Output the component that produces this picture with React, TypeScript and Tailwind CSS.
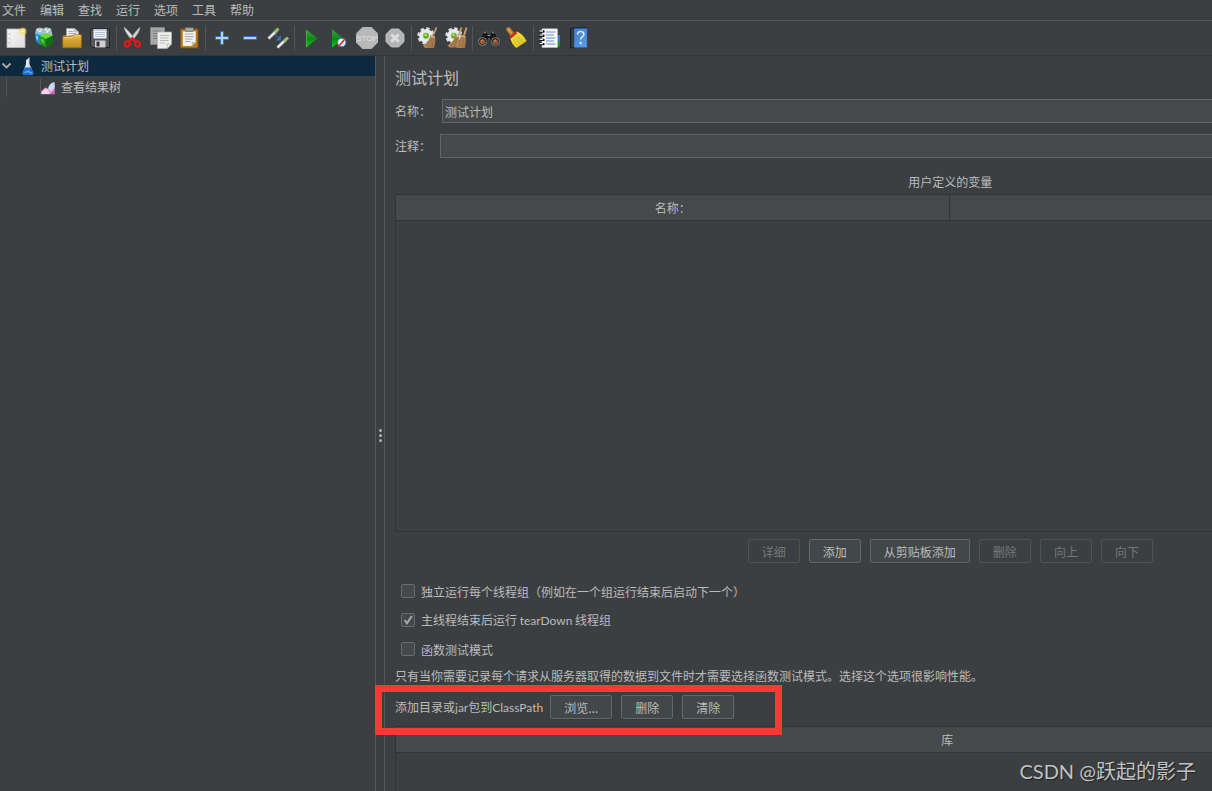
import React, { useState } from 'react';

const menus = ['文件', '编辑', '查找', '运行', '选项', '工具', '帮助'];

interface IconProps {
	children: React.ReactNode;
}

const Icon: React.FC<IconProps> = ({ children }) => (
	<svg width="24" height="24" viewBox="0 0 24 24" aria-hidden="true">{ children }</svg>
);

// Shared gradients for the toolbar and the tree icons
const Gradients = () => (
	<svg width="0" height="0" className="absolute" aria-hidden="true">
		<defs>
			<linearGradient id="paper" x1="0" y1="0" x2="1" y2="1">
				<stop offset="0" stopColor="#f8f8f8" />
				<stop offset="1" stopColor="#dcdcdc" />
			</linearGradient>
			<radialGradient id="glow">
				<stop offset="0" stopColor="#fffbd0" />
				<stop offset="0.45" stopColor="#f7e06a" stopOpacity="0.9" />
				<stop offset="1" stopColor="#f5d742" stopOpacity="0" />
			</radialGradient>
			<linearGradient id="gold" x1="0" y1="0" x2="0" y2="1">
				<stop offset="0" stopColor="#e3b84a" />
				<stop offset="1" stopColor="#c08a1c" />
			</linearGradient>
			<linearGradient id="play" x1="0" y1="0" x2="0" y2="1">
				<stop offset="0" stopColor="#3fa245" />
				<stop offset="0.5" stopColor="#0c8a10" />
				<stop offset="1" stopColor="#16c416" />
			</linearGradient>
			<linearGradient id="book" x1="0" y1="0" x2="1" y2="1">
				<stop offset="0" stopColor="#3d7fd6" />
				<stop offset="1" stopColor="#5c9ce8" />
			</linearGradient>
			<linearGradient id="straw" x1="0" y1="0" x2="1" y2="1">
				<stop offset="0" stopColor="#c59a6a" />
				<stop offset="1" stopColor="#9a6f42" />
			</linearGradient>
			<linearGradient id="yellowBroom" x1="0" y1="0" x2="1" y2="1">
				<stop offset="0" stopColor="#f7e84a" />
				<stop offset="1" stopColor="#d9c01c" />
			</linearGradient>
		</defs>
	</svg>
);

const NewIcon = () => (
	<Icon>
		<rect x="3" y="3" width="18" height="18.5" fill="url(#paper)" stroke="#b9b9b9" strokeWidth="0.8" />
		<path d="M6.5 3.5V21" stroke="#dedede" strokeWidth="0.6" />
		<path d="M4.6 8h1M4.6 12.5h1M4.6 17h1" stroke="#9a9a9a" strokeWidth="1" />
		<circle cx="18.8" cy="5.4" r="4.6" fill="url(#glow)" />
	</Icon>
);

const TemplatesIcon = () => (
	<Icon>
		<path d="M3 7l1.5-4.5L8 1.5l3 1.2 3-1.4 5 1.2L20.500 9 12 10z" fill="#a9bcc4" />
		<path d="M5 3l3.5 3.5M10 2.5L7 7M13 2.5l3 4M18 3l-4 4" stroke="#e9eff1" strokeWidth="1.3" />
		<path d="M2.8 7.5L9 9v10.5l-5-4z" fill="#1c8ccb" />
		<path d="M2.8 7.5L8 6l3.5 2L9 9.500z" fill="#6fc4ef" />
		<path d="M4 9.5l1.8.7v4L4.500 13z" fill="#a5def8" />
		<path d="M7.8 10l6 3v8.8l-6-4.3z" fill="#1f9d1d" />
		<path d="M13.8 13L21 9.5v8l-7.2 4.3z" fill="#0f6f11" />
		<path d="M7.8 10L14 6.800 21 9.5 13.8 13z" fill="#67dc35" />
		<path d="M9 12.3l3 1.6v3.8l-3-2z" fill="#4fc73a" />
	</Icon>
);

const OpenIcon = () => (
	<Icon>
		<path d="M3 9h3v11H3z" fill="#a87712" />
		<path d="M6.5 2.5h8l4 3.4V13h-12z" fill="#f0f0f0" stroke="#a8a8a8" strokeWidth="0.7" />
		<path d="M14.3 2.5v3.6h4" fill="#cfcfcf" stroke="#a8a8a8" strokeWidth="0.6" />
		<path d="M8.5 5.5h4.5M8.5 7.5h7.5M8.5 9.5h7.5" stroke="#a2a2a2" strokeWidth="0.9" />
		<path d="M2.8 10.5h9l2-1.8h7.6v13H2.8z" fill="url(#gold)" stroke="#9e6e10" strokeWidth="0.7" />
		<path d="M3.8 11.6h8.4l2-1.8h6.3" fill="none" stroke="#f2d487" strokeWidth="0.9" />
	</Icon>
);

const SaveIcon = () => (
	<Icon>
		<path d="M4 3h16.5l1 1v17.5H4.2l-1.7-1.7V4z" fill="#54585c" stroke="#202325" strokeWidth="1" />
		<path d="M5.5 3.2h13v9.3h-13z" fill="#f0f4fa" />
		<path d="M5.5 3.2h13v1.5h-13z" fill="#aebfd6" />
		<path d="M7 6.5h10M7 8.5h10M7 10.5h10" stroke="#a9bbd4" strokeWidth="0.9" />
		<path d="M7 14.5h10.5v7H7z" fill="#cfcfcf" />
		<path d="M8.5 15.6h3v4.8h-3z" fill="#303336" />
	</Icon>
);

const CutIcon = () => (
	<Icon>
		<path d="M3.5 1.5c0 3 3.5 8 7.5 12.5l2-1.5C10 8 6 3.5 3.5 1.5z" fill="#e2e4e4" stroke="#b4b8b8" strokeWidth="0.9" />
		<path d="M18.7 1.5c.3 3-3 8-7.2 12.5l-2-1.5C13 8 16 4 18.7 1.5z" fill="#d2d6d6" stroke="#a4a8a8" strokeWidth="0.9" />
		<ellipse cx="6.2" cy="18" rx="2.3" ry="2.8" transform="rotate(35 6.2 18)" fill="none" stroke="#d81a1a" strokeWidth="2.4" />
		<ellipse cx="16.5" cy="18" rx="2.3" ry="2.8" transform="rotate(-35 16.5 18)" fill="none" stroke="#d81a1a" strokeWidth="2.4" />
		<path d="M8 15.5l3.3-3 3.4 3" fill="none" stroke="#d81a1a" strokeWidth="2.6" />
	</Icon>
);

const CopyIcon = () => (
	<Icon>
		<path d="M1.5 1.5h14v17h-14z" fill="#a6a8a6" stroke="#898b89" strokeWidth="0.7" />
		<path d="M4 5h8M4 7.5h5M4 10h4M4 12.5h4" stroke="#7b7d7b" />
		<path d="M8.5 6h14v12L18 22.5H8.5z" fill="#ededeb" stroke="#b4b4b2" strokeWidth="0.7" />
		<path d="M22.5 18H18v4.5z" fill="#fff" stroke="#9d9d9b" strokeWidth="0.7" />
		<path d="M11 9.5h9M11 12h8.5M11 14.5h8.5M11 17h5" stroke="#b7b7b5" />
	</Icon>
);

const PasteIcon = () => (
	<Icon>
		<rect x="3.5" y="3" width="17.5" height="19" rx="1" fill="#b9791f" stroke="#7e4f10" strokeWidth="0.8" />
		<path d="M5.8 5.2h12.9v11.3L15.2 20H5.8z" fill="#f1f1ef" />
		<path d="M18.7 16.5h-3.5V20z" fill="#c5c5c3" stroke="#9d9d9b" strokeWidth="0.5" />
		<rect x="8" y="1.6" width="8.5" height="3.8" rx="1" fill="#a5a7a4" stroke="#5f615e" strokeWidth="0.7" />
		<path d="M8 8h8.5M8 10.5h8.5M8 13h7.5M8 15.5h5.5" stroke="#a9a9a7" />
	</Icon>
);

const PlusIcon = () => (
	<Icon>
		<path d="M10.5 5.5h3v5h5v3h-5v5h-3v-5h-5v-3h5z" fill="#b5d1f0" stroke="#3070c0" />
	</Icon>
);

const MinusIcon = () => (
	<Icon>
		<path d="M5.5 10.5h13v3h-13z" fill="#b5d1f0" stroke="#3070c0" />
	</Icon>
);

const ToggleIcon = () => (
	<Icon>
		<path d="M2.5 12.5l8.5-8" stroke="#8b8e8b" strokeWidth="3.2" />
		<path d="M2.5 12.5L9 6.3" stroke="#f0f0ee" strokeWidth="2" />
		<path d="M8.5 6.5l4-4" stroke="#90c66b" strokeWidth="2.8" />
		<path d="M11.5 21.5l8.5-8" stroke="#8b8e8b" strokeWidth="3.2" />
		<path d="M11.5 21.5l6.5-6.2" stroke="#f0f0ee" strokeWidth="2" />
		<path d="M18 15.5l4-4" stroke="#90c66b" strokeWidth="2.8" />
		<path d="M9 8.5l4 4" stroke="#2d74d8" strokeWidth="1.2" strokeDasharray="1.5 0.7" />
		<path d="M14.8 9.5v5h-5z" fill="#2d74d8" />
	</Icon>
);

const StartIcon = () => (
	<Icon>
		<path d="M7 3.5l11.5 9L7 21.8z" fill="url(#play)" />
		<path d="M7.5 4.5v16.3" stroke="#45bd45" strokeWidth="0.8" />
	</Icon>
);

const StartNoPauseIcon = () => (
	<Icon>
		<path d="M5 3.5l11.5 9L5 21.8z" fill="url(#play)" />
		<circle cx="14.7" cy="16.5" r="4.2" fill="#eef4fb" stroke="#3a78c8" strokeWidth="1.1" />
		<path d="M11.3 20.8l7-8.3" stroke="#dd2a1c" strokeWidth="1.6" />
	</Icon>
);

const StopIcon = () => (
	<Icon>
		<path d="M7.5 1h9L23 7.5v9L16.5 23h-9L1 16.5v-9z" fill="#b9b9b9" />
		<path d="M7.9 2h8.2L22 7.9v8.2L16.1 22H7.9L2 16.1V7.9z" fill="none" stroke="#adadad" strokeWidth="0.6" />
		<text x="12" y="15" textAnchor="middle" className="font-['Liberation_Sans'] text-[8px]" fill="#e2e2e2">STOP</text>
	</Icon>
);

const ShutdownIcon = () => (
	<Icon>
		<path d="M8.3 3h7.4L21 8.3v7.4L15.7 21H8.3L3 15.7V8.3z" fill="#b4b4b4" stroke="#c9c9c9" strokeWidth="0.8" />
		<path d="M8.2 8.2l7.6 7.6M15.8 8.2l-7.6 7.6" stroke="#dedede" strokeWidth="3" />
	</Icon>
);

const Gear = () => (
	<>
		<circle cx="10" cy="10" r="7.4" fill="none" stroke="#dcdcdc" strokeWidth="2.6" strokeDasharray="3.4 2.41" />
		<circle cx="10" cy="10" r="6.9" fill="#e9e9e9" />
		<circle cx="10" cy="9.7" r="3.4" fill="#cfd8c6" />
		<circle cx="10" cy="9.7" r="2.8" fill="#5fae22" />
		<circle cx="9.6" cy="9" r="1.3" fill="#b5e876" />
	</>
);

const ClearIcon = () => (
	<Icon>
		<Gear />
		<path d="M20.5 1.5l-3.5 8" stroke="#c9a272" strokeWidth="1.8" />
		<path d="M14.5 9l4.5 1.5c.5 4 .3 8-1 11.5H9l-2-2.500c4-2.500 6.500-6 7.500-10.500z" fill="url(#straw)" />
		<path d="M15 12l-4.500 8M16.500 12.500L13 21M17.800 12.500L16 21" stroke="#86603a" strokeWidth="0.6" />
		<path d="M14.5 10l4.500 1.500" stroke="#e0bf93" />
	</Icon>
);

const ClearAllIcon = () => (
	<Icon>
		<Gear />
		<path d="M17.5 1.5l-3 8M22.5 1.5l-2.5 8" stroke="#c9a272" strokeWidth="1.8" />
		<path d="M12 9l3 1c.5 4 .3 8-1 11.5H5.5l-2-2C7.500 17 10.500 13.5 12 9z" fill="url(#straw)" />
		<path d="M17 8.5l4.5 1.5c.6 4 .4 8-.6 12h-8l-1-2.5c3-3 4.6-7 5.1-11z" fill="url(#straw)" />
		<path d="M12 12l-5 8M13.5 11.5l-4 9.500M17.5 11.5l-3 9.500M19.8 12L18 21" stroke="#86603a" strokeWidth="0.6" />
		<path d="M12 10l3 1M17 9.5l4.5 1.3" stroke="#e0bf93" />
	</Icon>
);

const SearchIcon = () => (
	<Icon>
		<path d="M6 6l4-1 1 3h2l1-3 4 1 4.5 9.5-5 4-4.5-4v-3h-2v3l-4.5 4-5-4z" fill="#17191a" stroke="#5c5f61" strokeWidth="0.7" />
		<path d="M6.8 7l2.4-.5M17.2 7l-2.4-.5M10.5 9.5h3" stroke="#94989a" strokeWidth="1.2" />
		<circle cx="5.5" cy="15.5" r="4" fill="#202224" stroke="#96999b" strokeWidth="0.8" />
		<circle cx="18.5" cy="15.5" r="4" fill="#202224" stroke="#96999b" strokeWidth="0.8" />
		<circle cx="5.5" cy="15.7" r="2.5" fill="#a5592b" />
		<circle cx="18.5" cy="15.7" r="2.5" fill="#a5592b" />
		<path d="M4 15.5a2 2 0 012-1.5M17 15.5a2 2 0 012-1.5" fill="none" stroke="#e6a679" strokeWidth="0.8" />
	</Icon>
);

const ResetSearchIcon = () => (
	<Icon>
		<path d="M3.5 3.5l4 5" stroke="#b87a2a" strokeWidth="4.5" strokeLinecap="round" />
		<path d="M3.2 3l3 3.8" stroke="#dba95c" strokeWidth="1.5" strokeLinecap="round" />
		<path d="M5 11l7-5.5c3 1 6.5 4 9.7 9.5l-10.200 7C8.5 20 6 16 5 11z" fill="url(#yellowBroom)" />
		<path d="M8 13l4.5 7.5M10.5 11.5l5 7.5M12.5 10l6 7.5" stroke="#b8a017" strokeWidth="0.6" />
		<path d="M5 11.8l6.5-5.5" stroke="#d8261b" strokeWidth="2.4" />
	</Icon>
);

const FunctionIcon = () => (
	<Icon>
		<path d="M19 9h3v6h-3z" fill="#2c7be0" />
		<path d="M19 15h3v5.5h-3z" fill="#129b1e" />
		<path d="M4 2.8h15.5v18.7H4z" fill="#fbfbfb" stroke="#bdbdbd" strokeWidth="0.6" />
		<path d="M8 6h9.5M8 9h8M8 12h9.5M8 15h8M8 18h9.5" stroke="#5b8cc6" strokeWidth="1" />
		<path d="M2 5.5h3.5M2 9.7h3.5M2 13.9h3.5M2 18.1h3.5" stroke="#141414" strokeWidth="2.4" strokeLinecap="round" />
		<path d="M1.5 5H5M1.5 9.2H5M1.5 13.4H5M1.5 17.6H5" stroke="#e4e4e4" strokeWidth="1.3" />
	</Icon>
);

const HelpIcon = () => (
	<Icon>
		<path d="M4 2.5l3.5-1H21v20H7l-3 1.2z" fill="#14181c" />
		<path d="M5 3l2.5-.8v18.6l-2.5 1z" fill="#343c44" />
		<path d="M8 2.5h13v19H8z" fill="url(#book)" stroke="#2b63ae" strokeWidth="0.6" />
		<path d="M11.5 8.5c0-2 1.3-3 3.1-3s3.2 1.1 3.2 2.9c0 2.5-3.2 2.6-3.2 5.1" fill="none" stroke="#d9e8f9" strokeWidth="1.6" />
		<circle cx="14.6" cy="17" r="1.2" fill="#e6f0fb" />
	</Icon>
);

const toolGroups = [
	[
		{ name: '新建', icon: NewIcon },
		{ name: '模板', icon: TemplatesIcon },
		{ name: '打开', icon: OpenIcon },
		{ name: '保存', icon: SaveIcon },
	],
	[
		{ name: '剪切', icon: CutIcon },
		{ name: '复制', icon: CopyIcon },
		{ name: '粘贴', icon: PasteIcon },
	],
	[
		{ name: '全部展开', icon: PlusIcon },
		{ name: '全部折叠', icon: MinusIcon },
		{ name: '切换', icon: ToggleIcon },
	],
	[
		{ name: '启动', icon: StartIcon },
		{ name: '不停顿开始', icon: StartNoPauseIcon },
		{ name: '停止', icon: StopIcon },
		{ name: '关闭', icon: ShutdownIcon },
	],
	[
		{ name: '清除', icon: ClearIcon },
		{ name: '清除全部', icon: ClearAllIcon },
	],
	[
		{ name: '查找', icon: SearchIcon },
		{ name: '重置搜索', icon: ResetSearchIcon },
	],
	[
		{ name: '函数助手', icon: FunctionIcon },
		{ name: '帮助', icon: HelpIcon },
	],
];

const Toolbar = () => (
	<div className="flex h-[35px] shrink-0 items-center border-b border-[#323537] pl-0.5">
		{ toolGroups.map((group, i) => (
			<React.Fragment key={ i }>
				{ i > 0 && <div className="mx-0.5 h-[25px] w-px bg-[#555555]" /> }
				{ group.map(({ name, icon: ToolIcon }) => (
					<button key={ name } type="button" aria-label={ name } className="flex w-7 justify-center">
						<ToolIcon />
					</button>
				)) }
			</React.Fragment>
		)) }
	</div>
);

const FlaskIcon = () => (
	<svg width="14" height="20" viewBox="0 0 14 20" aria-hidden="true">
		<path d="M5 4.5L8.5 1v7l4 9.5L11 19H3l-1.5-1.5L5 8z" fill="#cfd9e2" />
		<path d="M3.8 11.5h6.5l2.3 6-1.6 1.7H3l-1.7-1.7z" fill="#1d6fd0" />
		<path d="M3.5 16.5l4-1 3.5 2" stroke="#6cb4f5" strokeWidth="1.2" fill="none" />
		<path d="M6 4v7" stroke="#f7fafc" />
	</svg>
);

const ResultsIcon = () => (
	<svg width="17" height="18" viewBox="0 0 17 18" aria-hidden="true">
		<path d="M1.5 1v15.5H16" fill="none" stroke="#56595b" />
		<path d="M2.5 16v-3l4-3.5 3 1.5 4-6 2 1v10z" fill="#f0a5d6" />
		<path d="M2.5 16v-2l4-3 3 1.5 1 3.5z" fill="#fbd3ef" />
		<path d="M9 10.5c1-3.5 3-6 6.5-6.5v6l-3 3z" fill="#c8dcf6" />
		<path d="M11 16l4.5-5v5z" fill="#c565c4" />
	</svg>
);

const Tree = () => (
	<nav className="w-[375px] shrink-0">
		<ul>
			<li>
				<div className="flex h-5 items-center bg-[#0d293e]">
					<svg width="13" height="12" viewBox="0 0 13 12" className="mr-2" aria-hidden="true">
						<path d="M2.5 3.5l4 4 4-4" fill="none" stroke="#adadad" strokeWidth="1.8" />
					</svg>
					<FlaskIcon />
					<span className="ml-1.5 leading-5">测试计划</span>
				</div>
				<ul className="ml-1.5 border-l border-[#505355]">
					<li className="flex h-[21px] items-center pl-8">
						<ResultsIcon />
						<span className="ml-[5px] leading-5">查看结果树</span>
					</li>
				</ul>
			</li>
		</ul>
	</nav>
);

interface PushButtonProps {
	children: React.ReactNode;
	disabled?: boolean;
}

const PushButton: React.FC<PushButtonProps> = ({ children, disabled }) => (
	<button
		type="button"
		disabled={ disabled }
		className="h-6 rounded-xs border border-[#646767] bg-[#424749] px-[13px] leading-6 shadow-[0_1px_0_#35393a] disabled:border-[#505355] disabled:bg-transparent disabled:text-[#777777] disabled:shadow-none"
	>
		{ children }
	</button>
);

interface CheckRowProps {
	children: React.ReactNode;
	initial?: boolean;
}

const CheckRow: React.FC<CheckRowProps> = ({ children, initial = false }) => {
	const [checked, setChecked] = useState(initial);

	return (
		<label className="flex h-[29px] items-center pl-1.5">
			<span className="mr-1.5 grid">
				<input
					type="checkbox"
					checked={ checked }
					onChange={ (e) => setChecked(e.target.checked) }
					className="col-start-1 row-start-1 size-3.5 appearance-none rounded-xs border border-[#6b6b6b] bg-[#43494a]"
				/>
				{ checked && (
					<svg width="14" height="14" viewBox="0 0 14 14" className="pointer-events-none col-start-1 row-start-1" aria-hidden="true">
						<path d="M3.5 7L6 10.2 10.8 3" fill="none" stroke="#a9a9a9" strokeWidth="2" />
					</svg>
				) }
			</span>
			<span className="pt-0.5">{ children }</span>
		</label>
	);
};

const TestPlanPanel = () => (
	<main className="min-w-0 flex-1">
		{/* The form is wider than the window and runs off its right side */}
		<div className="flex h-full w-[136%] flex-col pt-2.5 pr-1 pl-2.5">
			<h1 className="mb-[11px] text-base leading-[22px]">测试计划</h1>

			<div className="flex items-center">
				<label htmlFor="plan-name" className="mr-[11px] w-9 leading-6">名称：</label>
				<input id="plan-name" defaultValue="测试计划" className="h-6 flex-1 border border-[#646464] bg-[#45494a] px-0.5" />
			</div>
			<div className="mt-[11px] flex items-center">
				<label htmlFor="plan-comment" className="mr-[9px] w-9 leading-6">注释：</label>
				<input id="plan-comment" className="h-6 flex-1 border border-[#646464] bg-[#45494a] px-0.5" />
			</div>

			<h2 id="vars-title" className="mt-3.5 mb-0.5 text-center leading-5">用户定义的变量</h2>
			<div className="h-[338px] shrink-0 border border-[#323537]">
				<table aria-labelledby="vars-title" className="w-full table-fixed border-separate border-spacing-0">
					<thead>
						<tr className="h-[26px] bg-[#45494a]">
							<th className="border-r border-b border-[#323537] p-0 font-normal">名称：</th>
							<td className="border-b border-[#323537] p-0" />
						</tr>
					</thead>
				</table>
			</div>

			<div className="mt-[7px] flex justify-center gap-[9px]">
				<PushButton disabled>详细</PushButton>
				<PushButton>添加</PushButton>
				<PushButton>从剪贴板添加</PushButton>
				<PushButton disabled>删除</PushButton>
				<PushButton disabled>向上</PushButton>
				<PushButton disabled>向下</PushButton>
			</div>

			<div className="mt-[13px] mb-px">
				<CheckRow>独立运行每个线程组（例如在一个组运行结束后启动下一个）</CheckRow>
				<CheckRow initial>主线程结束后运行 <span className="font-['Lato']">tearDown</span> 线程组</CheckRow>
				<CheckRow>函数测试模式</CheckRow>
			</div>
			<p className="leading-6">只有当你需要记录每个请求从服务器取得的数据到文件时才需要选择函数测试模式。选择这个选项很影响性能。</p>

			<div className="relative mt-[7px] flex h-6 items-center gap-[9px] self-start">
				<span className="-mr-0.5 leading-6">
					添加目录或<span className="font-['Lato']">jar</span>包到<span className="font-['Lato']">ClassPath</span>
				</span>
				<PushButton>浏览...</PushButton>
				<PushButton>删除</PushButton>
				<PushButton>清除</PushButton>
				<div className="pointer-events-none absolute -top-2.5 -right-12 -bottom-4 -left-5 border-7 border-[#fd3636]" />
			</div>

			<div className="mt-[7px] mr-1.5 flex-1 border border-b-0 border-[#323537]">
				<table className="w-full border-separate border-spacing-0">
					<thead>
						<tr className="h-[26px] bg-[#45494a]">
							<th className="border-b border-[#323537] p-0 font-normal">库</th>
						</tr>
					</thead>
				</table>
			</div>
		</div>
	</main>
);

export default function App() {
	return (
		<div className="relative flex h-screen flex-col overflow-hidden bg-[#3c3f41] font-['Noto_Sans_CJK_SC',sans-serif] text-xs text-[#bbbbbb]">
			<Gradients />
			<header className="flex h-[21px] shrink-0 gap-3.5 border-b border-[#555555] pl-0.5">
				{ menus.map((menu) => (
					<button key={ menu } type="button" className="leading-5">{ menu }</button>
				)) }
			</header>
			<Toolbar />
			<div className="flex min-h-0 flex-1">
				<Tree />
				<div className="flex w-2.5 shrink-0 flex-col items-center justify-center gap-0.5 border-x border-[#555555] pt-6">
					<span className="size-[3px] rounded-full bg-[#afafaf]" />
					<span className="size-[3px] rounded-full bg-[#afafaf]" />
					<span className="size-[3px] rounded-full bg-[#afafaf]" />
				</div>
				<TestPlanPanel />
			</div>
			<div className="absolute right-4 bottom-1.5 text-xl text-[#c2c2c2] [text-shadow:1px_1px_1px_#222222]">
				<span className="font-['Lato']">CSDN @</span>跃起的影子
			</div>
		</div>
	);
}
